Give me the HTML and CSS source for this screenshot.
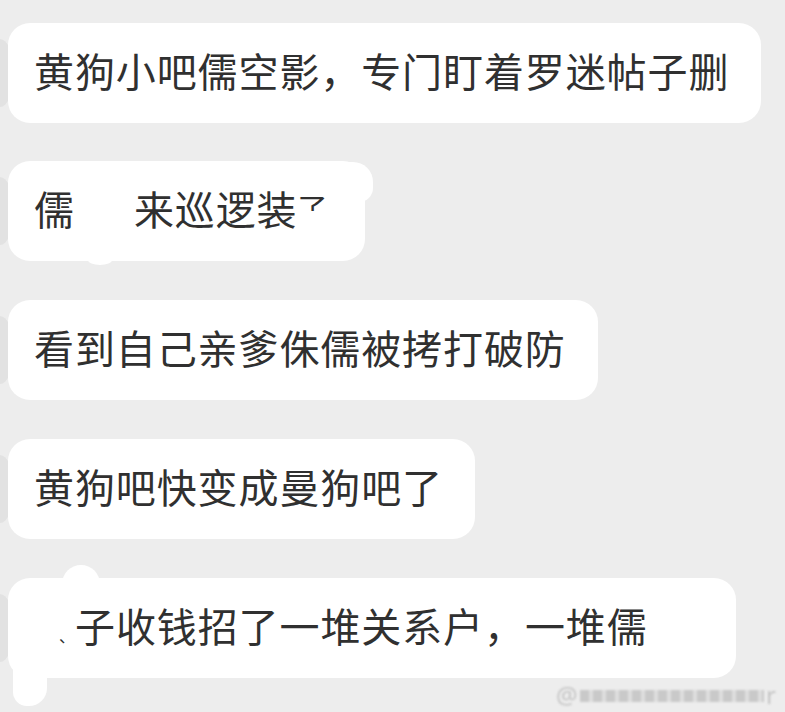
FILE: index.html
```html
<!DOCTYPE html>
<html lang="zh-CN">
<head>
  <meta charset="UTF-8">
  <meta name="viewport" content="width=device-width, initial-scale=1.0">
  <title>聊天记录</title>
  <link rel="stylesheet" href="styles.css">
</head>
<body>
  <div class="chat">
    <div class="bubble b1">黄狗小吧儒空影，专门盯着罗迷帖子删</div>
    <div class="bubble b2">儒<span class="gap"></span>来巡逻装<span class="cut">了</span></div>
    <div class="bubble b3">看到自己亲爹侏儒被拷打破防</div>
    <div class="bubble b4">黄狗吧快变成曼狗吧了</div>
    <div class="bubble b5"><span class="dot">、</span>子收钱招了一堆关系户，一堆儒</div>
  </div>
  <div class="mark"><span>@</span><i></i><span>r</span></div>
</body>
</html>
```

FILE: styles.css
```css
* {
  margin: 0;
  padding: 0;
  box-sizing: border-box;
}
body {
  background-color: #ededed;
  font-family: "Noto Sans CJK SC", "Noto Sans", sans-serif;
  color: #303030;
  overflow: hidden;
}
.chat {
  display: flex;
  flex-direction: column;
  align-items: flex-start;
  gap: 38.75px;
  padding: 22.5px 0 0 8px;
  height: 712px;
}
.bubble {
  position: relative;
  height: 100px;
  padding: 0 32px 0 26px;
  background-color: #fff;
  border-radius: 22px;
  font-size: 40px;
  line-height: 94px;
  letter-spacing: 0.9px;
  white-space: nowrap;
}
/* avatar edge peeking out on the left */
.bubble::before {
  content: "";
  position: absolute;
  left: -22px;
  top: 16px;
  width: 28px;
  height: 68px;
  border-radius: 50%;
  background-color: #e2e2e2;
  z-index: -1;
}
.gap {
  display: inline-block;
  width: 59px;
}
/* top of a half-hidden character */
.cut {
  display: inline-block;
  height: 19px;
  line-height: 30px;
  overflow: hidden;
  vertical-align: 14px;
  font-size: 30px;
  letter-spacing: 0;
}
.b2 {
  padding-right: 37px;
}
.b2::after {
  content: "";
  position: absolute;
  right: -8px;
  top: 1px;
  width: 44px;
  height: 40px;
  background-color: #fff;
  border-radius: 22px 20px 14px 10px;
}
.b2 .gap::after {
  content: "";
  position: absolute;
  left: 80px;
  bottom: -4px;
  width: 24px;
  height: 10px;
  border-radius: 50%;
  background-color: #fff;
}
.b5 {
  width: 728px;
}
.b5::after {
  content: "";
  position: absolute;
  left: 54px;
  top: -13px;
  width: 38px;
  height: 34px;
  border-radius: 19px 19px 0 0;
  background-color: #fff;
}
.b5 .dot {
  display: inline-block;
  width: 41px;
  padding-left: 25px;
  font-size: 16px;
  letter-spacing: 0;
}
.b5 .dot::after {
  content: "";
  position: absolute;
  left: 5px;
  top: 60px;
  width: 34px;
  height: 68px;
  border-radius: 8px 6px 18px 14px;
  background-color: #fff;
}
.mark {
  position: absolute;
  left: 556px;
  top: 681px;
  width: 220px;
  height: 26px;
  display: flex;
  align-items: center;
  color: #c4c4c4;
  font-family: "Noto Sans", sans-serif;
  font-size: 24px;
  filter: blur(1.2px);
}
.mark i {
  flex: 1;
  height: 12px;
  margin: 4px 2px 0;
  background: repeating-linear-gradient(90deg, #c9c9c9 0 9px, #dedede 9px 13px);
}
```
